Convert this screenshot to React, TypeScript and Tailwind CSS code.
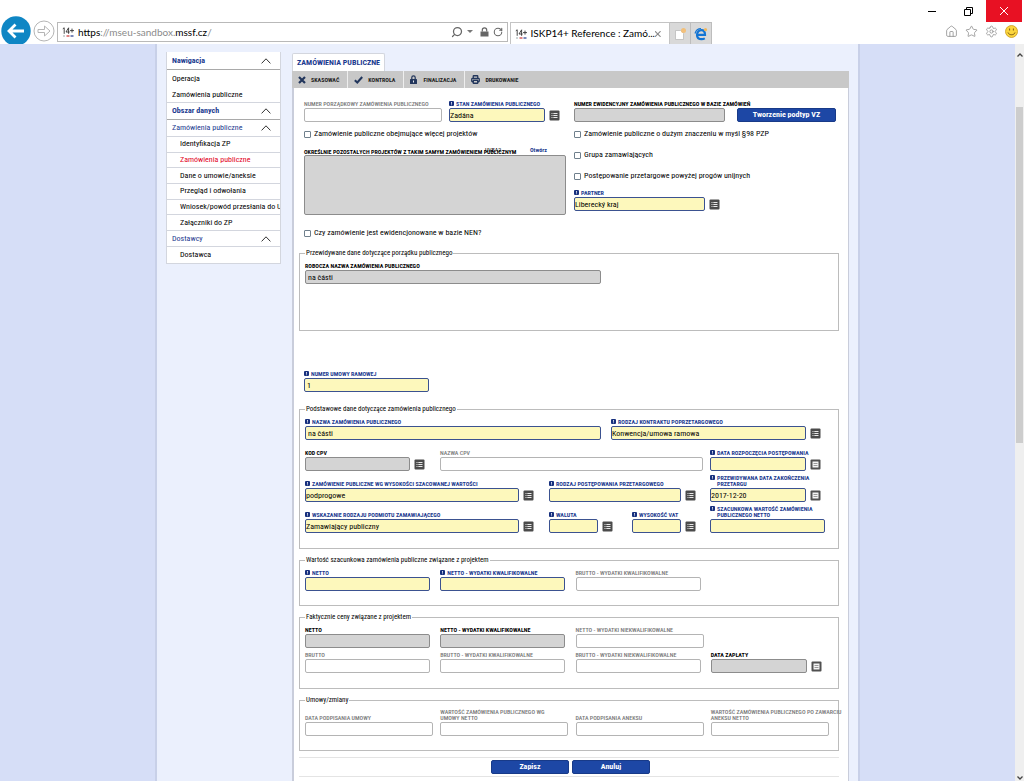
import React, { useId, useState } from 'react';
import { Home, Star, Settings, Search, RotateCw, Printer } from 'lucide-react';

type Tone = 'required' | 'locked' | 'plain';

interface FieldProps {
  label: React.ReactNode;
  tone?: Tone;
  width: string;
  value?: string;
  inset?: boolean;
  picker?: 'list' | 'date';
}

const labelTone: Record<Tone, string> = {
  required: 'font-bold text-[#1b3a8f]',
  locked: 'font-bold text-black',
  plain: 'font-medium text-[#757575]',
};

const inputTone: Record<Tone, string> = {
  required: 'bg-[#fdf8bc] border-[#3b5290]',
  locked: 'bg-[#d4d4d4] border-[#8c8c8c]',
  plain: 'bg-white border-[#b4b4b4]',
};

const Marker = () => (
  <svg viewBox="0 0 5 5" className="w-[5px] h-[5px] mr-0.5 shrink-0">
    <rect width="5" height="5" rx="1" fill="#17307e" />
    <path d="M2.5 1v1.8M2.5 3.4v.8" stroke="#fff" strokeWidth=".8" />
  </svg>
);

const PickerButton = ({ kind }: { kind: 'list' | 'date' }) => (
  <button type="button" aria-label={kind === 'list' ? 'Lista' : 'Kalendarz'} className="ml-1 mb-px shrink-0">
    {kind === 'list' ? (
      <svg viewBox="0 0 11 11" className="block w-[11px] h-[11px]">
        <rect x=".5" y=".5" width="10" height="10" rx="1" fill="#4b4b4b" />
        <path d="M2.5 3.5h1M4.3 3.5h4.2M2.5 5.5h1M4.3 5.5h4.2M2.5 7.5h1M4.3 7.5h4.2" stroke="#e8e8e8" />
      </svg>
    ) : (
      <svg viewBox="0 0 11 11" className="block w-[11px] h-[11px]">
        <rect x=".5" y=".5" width="10" height="10" rx="1" fill="#505050" />
        <rect x="2.5" y="2.5" width="6" height="6" fill="#f4f4f4" />
        <path d="M3.5 4.5h4M3.5 6.5h4" stroke="#9a9a9a" />
      </svg>
    )}
  </button>
);

const Field = ({ label, tone = 'plain', width, value = '', inset, picker }: FieldProps) => {
  const id = useId();
  return (
    <div className="shrink-0">
      <label
        htmlFor={id}
        className={`flex pt-px pb-px text-[6px] leading-[6px] whitespace-nowrap ${labelTone[tone]}`}
      >
        {tone === 'required' && <Marker />}
        <span>{label}</span>
      </label>
      <div className="flex items-end">
        <input
          id={id}
          type="text"
          defaultValue={value}
          readOnly={tone === 'locked'}
          className={`block shrink-0 h-[14px] border rounded-[2px] text-[8px] leading-3 text-black outline-none ${inset ? 'px-0.5' : 'px-0'} ${width} ${inputTone[tone]}`}
        />
        {picker && <PickerButton kind={picker} />}
      </div>
    </div>
  );
};

const Check = ({ label }: { label: string }) => (
  <label className="flex items-center h-[10px] text-[8px] whitespace-nowrap">
    <input
      type="checkbox"
      className="appearance-none w-[7px] h-[7px] mr-[3px] border border-[#6f7f8c] rounded-[1px] bg-white checked:bg-[#1b3a8f]"
    />
    {label}
  </label>
);

const Group = ({ title, height, children }: { title: string; height: string; children: React.ReactNode }) => (
  <fieldset className={`border border-[#bcbcbc] pl-[5px] pr-0.5 ${height}`}>
    <legend className="h-[10px] leading-[10px] px-px text-[7px]">{title}</legend>
    {children}
  </fieldset>
);

const BlueButton = ({ children, className }: { children: React.ReactNode; className: string }) => (
  <button
    type="button"
    className={`h-[14px] rounded-[2px] bg-[#1d47a5] border border-[#183a88] text-white text-[8px] leading-3 font-bold ${className}`}
  >
    {children}
  </button>
);

const Chevron = () => (
  <svg viewBox="0 0 10 6" className="w-[10px] h-[6px] mr-[9px]">
    <path d="M.6 5.4 5 .8l4.4 4.6" fill="none" stroke="#333" />
  </svg>
);

const Favicon = () => (
  <svg viewBox="0 0 12 10" className="w-3 h-[10px] shrink-0">
    <path d="M.8 1.8 2.2.8v6M6.6 6.8v-6L4 5h3.6M8 3.6h4M10 1.6v4" fill="none" stroke="#333" strokeWidth=".9" />
    <path d="M1 9h2" stroke="#9aa" />
    <path d="M4.5 9h3" stroke="#c33" strokeWidth="1.2" />
    <path d="M8.5 9h3" stroke="#223a8c" strokeWidth="1.2" />
  </svg>
);

const BrowserBar = () => (
  <header className="h-11 shrink-0 bg-white overflow-hidden font-['Lato',sans-serif]">
    <div className="flex justify-end h-[22px] pr-0.5">
      <button aria-label="Minimize" className="w-9 grid place-items-center">
        <svg viewBox="0 0 8 8" className="w-2 h-2"><path d="M0 4.5h8" stroke="#000" /></svg>
      </button>
      <button aria-label="Restore" className="w-9 grid place-items-center">
        <svg viewBox="0 0 9 9" className="w-[9px] h-[9px]">
          <path d="M.5 2.5h6v6h-6zM2.5 2.5v-2h6v6h-2" fill="none" stroke="#000" />
        </svg>
      </button>
      <button aria-label="Close" className="w-9 grid place-items-center bg-[#e81123]">
        <svg viewBox="0 0 8 8" className="w-2 h-2"><path d="M0 0l8 8M8 0 0 8" stroke="#fff" /></svg>
      </button>
    </div>
    <div className="flex h-[22px]">
      <button aria-label="Back" className="w-[30px] h-[30px] ml-px -mt-1.5 shrink-0">
        <svg viewBox="0 0 30 30" className="w-[30px] h-[30px]">
          <circle cx="15" cy="15" r="14.7" fill="#0f86c4" />
          <path d="M23 15H8.5M14.5 8.5 8 15l6.500 6.500" fill="none" stroke="#fff" strokeWidth="2.8" />
        </svg>
      </button>
      <button aria-label="Forward" className="w-[22px] h-[22px] ml-0.5 -mt-0.5 shrink-0">
        <svg viewBox="0 0 22 22" className="w-[22px] h-[22px]" fill="none" stroke="#b5b5b5">
          <circle cx="11" cy="11" r="10" />
          <path d="M5 9.500h6.500V6l5.500 5-5.500 5v-3.500H5z" />
        </svg>
      </button>
      <div className="flex items-center w-[44%] h-5 ml-0.5 px-1 border border-[#b9b9b9] text-[#666]">
        <Favicon />
        <div className="flex-1 ml-1 text-[10px] text-[#8a8a8a]">
          <span className="text-black">https</span>://mseu-sandbox.<span className="text-black">mssf.cz</span>/
        </div>
        <Search className="w-3 h-3 -scale-x-100" strokeWidth={2.5} />
        <svg viewBox="0 0 6 4" className="w-[6px] h-1 mx-1"><path d="M0 0h6L3 3z" fill="#777" /></svg>
        <svg viewBox="0 0 9 10" className="w-[9px] h-[10px] mx-[3px]">
          <path d="M2.300 4.500V3a2.200 2.200 0 0 1 4.400 0v1.500" fill="none" stroke="#666" strokeWidth="1.200" />
          <rect x=".5" y="4.500" width="8" height="5" fill="#666" />
        </svg>
        <RotateCw className="w-[10px] h-[10px] ml-px" strokeWidth={2.5} />
      </div>
      <div className="flex items-center w-40 ml-0.5 px-1 border border-b-0 border-[#c4c4c4] text-[10px] whitespace-nowrap">
        <Favicon />
        <span className="flex-1 ml-1">ISKP14+ Reference : Zamó...</span>
        <svg viewBox="0 0 6 6" className="w-[6px] h-[6px] mr-1"><path d="M0 0l6 6M6 0 0 6" stroke="#888" strokeWidth="1.200" /></svg>
      </div>
      <button aria-label="New tab" className="w-[21px] grid place-items-center bg-[#d9d9d9] border-t border-r border-[#bdbdbd]">
        <svg viewBox="0 0 14 14" className="w-[14px] h-[14px]">
          <path d="M2.500 3.500h5l3 3v6h-8z" fill="#fff" stroke="#bbb" strokeWidth=".8" />
          <circle cx="10.500" cy="3.500" r="2.500" fill="#f3c07a" />
        </svg>
      </button>
      <button aria-label="Open in Edge" className="w-[21px] grid place-items-center bg-[#d9d9d9] border-t border-r border-[#bdbdbd]">
        <svg viewBox="0 0 14 14" className="w-[14px] h-[14px]">
          <path d="M3.400 7.800h7.600C11 4.600 9.400 3.200 7.400 3.200 4.800 3.200 3 5.200 3 8c0 2.600 2 4.200 4.600 4.200 1.300 0 2.300-.3 3.200-.8" fill="none" stroke="#1475d4" strokeWidth="2.200" />
          <path d="M1 6.500C2 3 4.600 1.600 7 1.600" fill="none" stroke="#1475d4" strokeWidth="1.200" />
          <circle cx="11.500" cy="2.700" r="1.600" fill="#f2b75a" />
        </svg>
      </button>
      <div className="flex items-center ml-auto mb-1 mr-1.5 gap-[7px] text-[#8f8f8f]">
        <Home className="w-[13px] h-[13px]" strokeWidth={1.5} />
        <Star className="w-[13px] h-[13px]" strokeWidth={1.5} />
        <Settings className="w-[13px] h-[13px]" strokeWidth={1.5} />
        <svg viewBox="0 0 13 13" className="w-[13px] h-[13px]">
          <circle cx="6.500" cy="6.500" r="6" fill="#fbd53c" stroke="#c99b1c" strokeWidth=".8" />
          <path d="M4.600 3.500v2M8.400 3.500v2M3 7.500c1 3 6 3 7 0" fill="none" stroke="#6b4a10" strokeWidth=".9" />
        </svg>
      </div>
    </div>
  </header>
);

const areaItems = [
  'Identyfikacja ZP',
  'Zamówienia publiczne',
  'Dane o umowie/aneksie',
  'Przegląd i odwołania',
  'Wniosek/powód przesłania do UOH',
  'Załączniki do ZP',
];

const Sidebar = () => {
  const [active, setActive] = useState('Zamówienia publiczne');
  return (
    <nav className="w-[115px] shrink-0 self-start mt-2 bg-white border border-t-0 border-[#d3d6de] text-[8px] whitespace-nowrap overflow-hidden">
      <h2 className="flex items-center justify-between h-[18px] pl-[5px] border-b border-[#a9a9a9] font-bold text-[#1b3a8f]">
        Nawigacja <Chevron />
      </h2>
      <a href="#operacja" className="flex items-center h-[17px] pl-[5px]">Operacja</a>
      <a href="#zamowienia" className="flex items-center h-4 pl-[5px] border-b border-[#d3d6de]">Zamówienia publiczne</a>
      <h2 className="flex items-center justify-between h-[17px] pl-[5px] border-b border-[#a9a9a9] font-bold text-[#1b3a8f]">
        Obszar danych <Chevron />
      </h2>
      <h3 className="flex items-center justify-between h-[17px] pl-[5px] border-b border-[#d3d6de] text-[#1b3a8f]">
        Zamówienia publiczne <Chevron />
      </h3>
      <ul className="flex flex-col h-[94px]">
        {areaItems.map((item) => (
          <li key={item} className="flex-1 flex items-center border-b border-[#d3d6de]">
            <a
              href="#obszar"
              onClick={() => setActive(item)}
              className={`pl-[13px] ${item === active ? 'text-[#e2001a]' : 'text-black'}`}
            >
              {item}
            </a>
          </li>
        ))}
      </ul>
      <h3 className="flex items-center justify-between h-4 pl-[5px] border-b border-[#d3d6de] text-[#1b3a8f]">
        Dostawcy <Chevron />
      </h3>
      <a href="#dostawca" className="flex items-center h-4 pl-[13px]">Dostawca</a>
    </nav>
  );
};

const Toolbar = () => (
  <div className="flex h-[17px] bg-[#c8c8c8] text-[6px] font-bold text-[#222]">
    <button className="flex items-center pl-1.5 pr-2 border-r border-[#eee]">
      <svg viewBox="0 0 8 8" className="w-2 h-2 mr-[5px]"><path d="M1 1l6 6M7 1 1 7" stroke="#22365c" strokeWidth="2.200" /></svg>
      SKASOWAĆ
    </button>
    <button className="flex items-center pl-1.5 pr-2 border-r border-[#eee]">
      <svg viewBox="0 0 9 8" className="w-[9px] h-2 mr-[5px]"><path d="M.8 4.200 3.300 6.500 8.200 1" fill="none" stroke="#22365c" strokeWidth="2" /></svg>
      KONTROLA
    </button>
    <button className="flex items-center pl-1.5 pr-2 border-r border-[#eee]">
      <svg viewBox="0 0 7 9" className="w-[7px] h-[9px] mr-1.5">
        <path d="M1.800 4V2.500a1.700 1.700 0 0 1 3.400 0V4" fill="none" stroke="#22365c" strokeWidth="1.200" />
        <rect y="4" width="7" height="5" rx=".6" fill="#22365c" />
        <path d="M3.500 5.500v2" stroke="#fff" strokeWidth=".9" />
      </svg>
      FINALIZACJA
    </button>
    <button className="flex items-center pl-1.5 pr-2">
      <Printer className="w-[9px] h-[9px] mr-[5px] text-[#22365c]" strokeWidth={3.5} />
      DRUKOWANIE
    </button>
  </div>
);

const Basics = () => (
  <div className="flex gap-2 pl-[5px]">
    <div className="w-[262px] shrink-0">
      <div className="flex gap-[7px]">
        <Field label="NUMER PORZĄDKOWY ZAMÓWIENIA PUBLICZNEGO" width="w-[138px]" />
        <Field label="STAN ZAMÓWIENIA PUBLICZNEGO" tone="required" width="w-24" value="Zadána" picker="list" />
      </div>
      <div className="mt-[7px]">
        <Check label="Zamówienie publiczne obejmujące więcej projektów" />
      </div>
      <div className="relative mt-2">
        <label htmlFor="pozostale" className="block pt-0.5 text-[6px] leading-[6px] font-bold whitespace-nowrap">
          OKREŚLNIE POZOSTAŁYCH PROJEKTÓW Z TAKIM SAMYM ZAMÓWIENIEM PUBLICZNYM
        </label>
        <span className="absolute -top-px left-[181px] text-[6px] leading-[7px]">UVEA2</span>
        <a href="#otworz" className="absolute -top-px left-[226px] text-[6px] leading-[7px] font-bold text-[#1b3a8f]">Otwórz</a>
        <textarea id="pozostale" readOnly className="block w-full h-[60px] resize-none border border-[#8c8c8c] rounded-[2px] bg-[#d4d4d4]" />
      </div>
      <div className="mt-[13px]">
        <Check label="Czy zamówienie jest ewidencjonowane w bazie NEN?" />
      </div>
    </div>
    <div className="flex-1">
      <div className="flex items-end justify-between pr-[3px]">
        <div className="w-[151px]">
          <Field label="NUMER EWIDENCYJNY ZAMÓWIENIA PUBLICZNEGO W BAZIE ZAMÓWIEŃ" tone="locked" width="w-[151px]" />
        </div>
        <BlueButton className="w-[99px]">Tworzenie podtyp VZ</BlueButton>
      </div>
      <div className="flex flex-col gap-[11px] mt-[7px] mb-2">
        <Check label="Zamówienie publiczne o dużym znaczeniu w myśl §98 PZP" />
        <Check label="Grupa zamawiających" />
        <Check label="Postępowanie przetargowe powyżej progów unijnych" />
      </div>
      <Field label="PARTNER" tone="required" width="w-[131px]" value="Liberecký kraj" picker="list" />
    </div>
  </div>
);

export default function App() {
  return (
    <div className="h-screen flex flex-col overflow-hidden bg-white text-black">
      <BrowserBar />
      <div className="flex-1 flex min-h-0 bg-[#d6def7] font-['Roboto_Condensed',Roboto,sans-serif]">
        <div className="flex-1 min-w-0 overflow-hidden">
          <div className="flex items-stretch gap-[11px] w-full max-w-[705px] min-h-full mx-auto pl-[9px] pr-[9px] bg-[#ebf0fd] border-x-2 border-[#c8d0e8]">
            <Sidebar />
            <main className="flex-1 flex flex-col pt-[9px]">
              <h1 className="self-start flex items-center h-[18px] px-1 bg-white border border-b-0 border-[#d3d6de] rounded-t-[2px] text-[8px] font-bold text-[#1b3a8f]">
                ZAMÓWIENIA PUBLICZNE
              </h1>
              <Toolbar />
              <form className="flex-1 pt-3 pl-[5px] pr-[9px] bg-white border-l-2 border-r border-[#c9cddb]">
                <Basics />

                <div className="mt-[10px]">
                  <Group title="Przewidywane dane dotyczące porządku publicznego" height="h-[83px]">
                    <div className="pt-1">
                      <Field label="ROBOCZA NAZWA ZAMÓWIENIA PUBLICZNEGO" tone="locked" width="w-[296px]" value="na části" inset />
                    </div>
                  </Group>
                </div>

                <div className="mt-[39px] mb-3 pl-[5px]">
                  <Field label="NUMER UMOWY RAMOWEJ" tone="required" width="w-[125px]" value="1" inset />
                </div>

                <div className="flex flex-col gap-1.5">
                  <Group title="Podstawowe dane dotyczące zamówienia publicznego" height="h-[145px]">
                    <div className="flex gap-[10px] pt-1">
                      <Field label="NAZWA ZAMÓWIENIA PUBLICZNEGO" tone="required" width="w-[296px]" value="na části" inset />
                      <Field label="RODZAJ KONTRAKTU POPRZETARGOWEGO" tone="required" width="w-[195px]" value="Konwencja/umowa ramowa" picker="list" />
                    </div>
                    <div className="flex items-end h-[31px]">
                      <div className="w-[135px]">
                        <Field label="KOD CPV" tone="locked" width="w-[105px]" picker="list" />
                      </div>
                      <div className="w-[270px]">
                        <Field label="NAZWA CPV" width="w-[263px]" />
                      </div>
                      <Field label="DATA ROZPOCZĘCIA POSTĘPOWANIA" tone="required" width="w-24" picker="date" />
                    </div>
                    <div className="flex items-end h-[31px]">
                      <div className="w-[244px]">
                        <Field label="ZAMÓWIENIE PUBLICZNE WG WYSOKOŚCI SZACOWANEJ WARTOŚCI" tone="required" width="w-[214px]" value="podprogowe" picker="list" />
                      </div>
                      <div className="w-[161px]">
                        <Field label="RODZAJ POSTĘPOWANIA PRZETARGOWEGO" tone="required" width="w-[132px]" picker="list" />
                      </div>
                      <Field label={<>PRZEWIDYWANA DATA ZAKOŃCZENIA<br />PRZETARGU</>} tone="required" width="w-24" value="2017-12-20" picker="date" />
                    </div>
                    <div className="flex items-end h-[31px]">
                      <div className="w-[244px]">
                        <Field label="WSKAZANIE RODZAJU PODMIOTU ZAMAWIAJĄCEGO" tone="required" width="w-[214px]" value="Zamawiający publiczny" picker="list" />
                      </div>
                      <div className="w-[83px]">
                        <Field label="WALUTA" tone="required" width="w-[49px]" picker="list" />
                      </div>
                      <div className="w-[78px]">
                        <Field label="WYSOKOŚĆ VAT" tone="required" width="w-[49px]" picker="list" />
                      </div>
                      <Field label={<>SZACUNKOWA WARTOŚĆ ZAMÓWIENIA<br />PUBLICZNEGO NETTO</>} tone="required" width="w-[115px]" />
                    </div>
                  </Group>

                  <Group title="Wartość szacunkowa zamówienia publiczne związane z projektem" height="h-[51px]">
                    <div className="grid grid-cols-4 gap-x-[10px] pt-1">
                      <Field label="NETTO" tone="required" width="w-[125px]" />
                      <Field label="NETTO - WYDATKI KWALIFIKOWALNE" tone="required" width="w-[125px]" />
                      <Field label="BRUTTO - WYDATKI KWALIFIKOWALNE" width="w-[125px]" />
                    </div>
                  </Group>

                  <Group title="Faktycznie ceny związane z projektem" height="h-[77px]">
                    <div className="grid grid-cols-4 gap-x-[10px] gap-y-[3px] pt-1">
                      <Field label="NETTO" tone="locked" width="w-[125px]" />
                      <Field label="NETTO - WYDATKI KWALIFIKOWALNE" tone="locked" width="w-[125px]" />
                      <Field label="NETTO - WYDATKI NIEKWALIFIKOWALNE" width="w-32" />
                      <div />
                      <Field label="BRUTTO" width="w-[125px]" />
                      <Field label="BRUTTO - WYDATKI KWALIFIKOWALNE" width="w-[125px]" />
                      <Field label="BRUTTO - WYDATKI NIEKWALIFIKOWALNE" width="w-[125px]" />
                      <Field label="DATA ZAPŁATY" tone="locked" width="w-24" picker="date" />
                    </div>
                  </Group>

                  <Group title="Umowy/zmiany" height="h-[56px]">
                    <div className="grid grid-cols-4 gap-x-[10px] items-end h-[31px]">
                      <Field label="DATA PODPISANIA UMOWY" width="w-32" />
                      <Field label={<>WARTOŚĆ ZAMÓWIENIA PUBLICZNEGO WG<br />UMOWY NETTO</>} width="w-32" />
                      <Field label="DATA PODPISANIA ANEKSU" width="w-32" />
                      <Field label={<>WARTOŚĆ ZAMÓWIENIA PUBLICZNEGO PO ZAWARCIU<br />ANEKSU NETTO</>} width="w-[118px]" />
                    </div>
                  </Group>
                </div>

                <div className="flex justify-center gap-[3px] mt-1.5 py-0.5 pl-[3px] border-y border-[#e4e4e4]">
                  <BlueButton className="w-[78px]">Zapisz</BlueButton>
                  <BlueButton className="w-[78px]">Anuluj</BlueButton>
                </div>
              </form>
            </main>
          </div>
        </div>

        {/* Scrollbar */}
        <div className="flex flex-col items-center w-[9px] shrink-0 pt-1.5 bg-[#efefef]">
          <svg viewBox="0 0 6 8" className="w-[6px] h-2 mt-px"><path d="M.5 5.500 3 3l2.500 2.500" fill="none" stroke="#444" strokeWidth="1.300" /></svg>
          <div className="w-[7px] h-[46%] mt-12 bg-[#cdcdcd]" />
          <svg viewBox="0 0 6 8" className="w-[6px] h-2 mt-auto"><path d="M.5 3.500 3 6l2.500-2.500" fill="none" stroke="#444" strokeWidth="1.300" /></svg>
        </div>
      </div>
    </div>
  );
}
